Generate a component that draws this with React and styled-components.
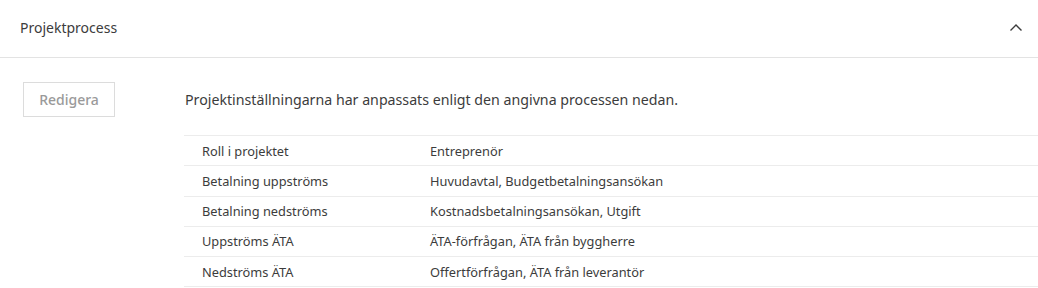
import React from "react";
import styled, { createGlobalStyle } from "styled-components";

const Global = createGlobalStyle`
  html, body { margin: 0; padding: 0; background: #fff; }
  body { font-family: "Noto Sans", "Open Sans", sans-serif; color: #3c3c3c; }
`;

const Panel = styled.section`
  width: 1038px;
`;

const Header = styled.header`
  height: 58px;
  display: flex;
  align-items: center;
  justify-content: space-between;
  padding: 0 14px 2px 20px;
  box-sizing: border-box;
  border-bottom: 1.5px solid #e3e3e3;
`;

const Title = styled.h2`
  margin: 0;
  font-size: 14px;
  font-weight: 400;
  color: #3c3c3c;
`;

const Toggle = styled.button`
  border: 0;
  background: none;
  padding: 0;
  width: 16px;
  height: 16px;
  display: flex;
  align-items: center;
  justify-content: center;
  color: #3c3c3c;
`;

const Body = styled.div`
  display: grid;
  grid-template-columns: 184px 1fr;
  padding-top: 24px;
`;

const Side = styled.div`
  padding-left: 23px;
`;

const EditButton = styled.button`
  width: 92px;
  height: 35px;
  border: 1px solid #dcdcdc;
  background: #fff;
  color: #9a9a9a;
  font-family: inherit;
  font-size: 14px;
  font-weight: 500;
  padding: 0;
`;

const Main = styled.div`
  display: flex;
  flex-direction: column;
`;

const Lead = styled.p`
  margin: 0;
  padding-left: 1px;
  height: 35px;
  line-height: 36px;
  font-size: 14.2px;
  color: #3c3c3c;
`;

const Table = styled.table`
  margin-top: 18px;
  width: 100%;
  border-collapse: collapse;
  border-top: 1px solid #ececec;
`;

const Row = styled.tr`
  border-bottom: 1px solid #ececec;
`;

const Cell = styled.td`
  height: 29.25px;
  padding: 0 0 0 ${(p) => (p.$value ? "0" : "18px")};
  width: ${(p) => (p.$value ? "auto" : "228px")};
  font-size: 12.8px;
  color: #3c3c3c;
  vertical-align: middle;
`;

const rows = [
  ["Roll i projektet", "Entreprenör"],
  ["Betalning uppströms", "Huvudavtal, Budgetbetalningsansökan"],
  ["Betalning nedströms", "Kostnadsbetalningsansökan, Utgift"],
  ["Uppströms ÄTA", "ÄTA-förfrågan, ÄTA från byggherre"],
  ["Nedströms ÄTA", "Offertförfrågan, ÄTA från leverantör"],
];

export default function App() {
  return (
    <Panel>
      <Global />
      <Header>
        <Title>Projektprocess</Title>
        <Toggle aria-label="Fäll ihop">
          <svg width="14" height="9" viewBox="0 0 14 9" fill="none">
            <path d="M1.5 7.5 L7 2 L12.5 7.5" stroke="#3c3c3c" strokeWidth="1.4" />
          </svg>
        </Toggle>
      </Header>
      <Body>
        <Side>
          <EditButton>Redigera</EditButton>
        </Side>
        <Main>
          <Lead>Projektinställningarna har anpassats enligt den angivna processen nedan.</Lead>
          <Table>
            <tbody>
              {rows.map(([k, v]) => (
                <Row key={k}>
                  <Cell>{k}</Cell>
                  <Cell $value>{v}</Cell>
                </Row>
              ))}
            </tbody>
          </Table>
        </Main>
      </Body>
    </Panel>
  );
}
